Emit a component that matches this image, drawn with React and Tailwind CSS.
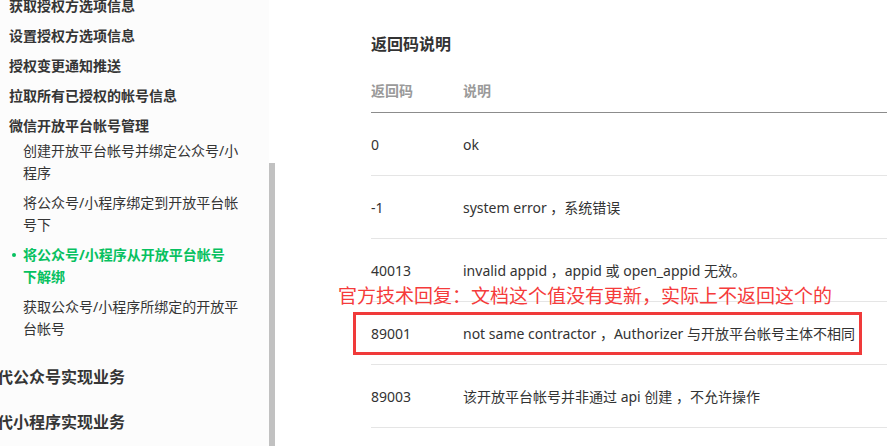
import React from 'react';

const topItems = ['获取授权方选项信息', '设置授权方选项信息', '授权变更通知推送', '拉取所有已授权的帐号信息', '微信开放平台帐号管理'];

const subItems = [
  { lines: ['创建开放平台帐号并绑定公众号/小', '程序'] },
  { lines: ['将公众号/小程序绑定到开放平台帐', '号下'] },
  { lines: ['将公众号/小程序从开放平台帐号', '下解绑'], active: true },
  { lines: ['获取公众号/小程序所绑定的开放平', '台帐号'] },
];

const rows = [
  { code: '0', desc: 'ok' },
  { code: '-1', desc: 'system error ，系统错误' },
  { code: '40013', desc: 'invalid appid ，appid 或 open_appid 无效。' },
  { code: '89001', desc: 'not same contractor ，Authorizer 与开放平台帐号主体不相同' },
  { code: '89003', desc: '该开放平台帐号并非通过 api 创建 ，不允许操作' },
];

const Sidebar = () => (
  <aside className="w-[269px] shrink-0 bg-[#fcfcfc] text-[#353535]">
    <div className="mt-[-10px]">
      {topItems.map((t) => (
        <div key={t} className="h-[30px] flex items-center pl-[9px] text-[14px] font-bold">
          {t}
        </div>
      ))}
    </div>
    <div>
      {subItems.map((item, i) => (
        <div key={i} className="relative pl-[23px] pb-[8px] text-[14px] leading-[22px]">
          {item.active && (
            <span className="absolute left-[12px] top-[9px] w-[4px] h-[4px] rounded-full bg-[#07c160]" />
          )}
          {item.lines.map((l) => (
            <div key={l} className={item.active ? 'font-bold text-[#07c160]' : ''}>
              {l}
            </div>
          ))}
        </div>
      ))}
    </div>
    <div className="mt-[6px] ml-[-3px]">
      <div className="h-[45px] flex items-center text-[16px] font-bold whitespace-nowrap">代公众号实现业务</div>
      <div className="h-[45px] flex items-center text-[16px] font-bold whitespace-nowrap">代小程序实现业务</div>
    </div>
  </aside>
);

const App = () => {
  return (
    <div
      className="relative w-[887px] h-[446px] overflow-hidden flex bg-white"
      style={{ fontFamily: '"Noto Sans", "Noto Sans CJK SC", sans-serif' }}
    >
      <Sidebar />

      {/* scrollbar */}
      <div className="w-[6px] shrink-0 flex flex-col">
        <div className="h-[163px]" />
        <div className="flex-1 bg-[#c1c1c1]" />
      </div>

      <main className="flex-1 pl-[96px] pt-[32px] text-[#333]">
        <h2 className="text-[16px] leading-[24px] font-semibold whitespace-nowrap">返回码说明</h2>
        <div className="mt-[13px] h-[44px] flex items-center border-b border-[#8c8c8c] text-[14px] font-semibold text-[#9a9a9a]">
          <div className="w-[92px]">返回码</div>
          <div>说明</div>
        </div>
        {rows.map((r) => (
          <div key={r.code} className="h-[63px] flex items-center border-b border-[#e5e5e5] text-[14px] whitespace-nowrap">
            <div className="w-[92px]">{r.code}</div>
            <div>{r.desc}</div>
          </div>
        ))}
      </main>

      {/* annotation overlay */}
      <div className="absolute left-[338px] top-[284px] text-[19px] leading-[24px] text-[#f53b3b] whitespace-nowrap">
        官方技术回复：文档这个值没有更新，实际上不返回这个的
      </div>
      <div className="absolute left-[353px] top-[312px] w-[509px] h-[43px] border-[3px] border-[#f03a3a]" />
    </div>
  );
};

export default App;
